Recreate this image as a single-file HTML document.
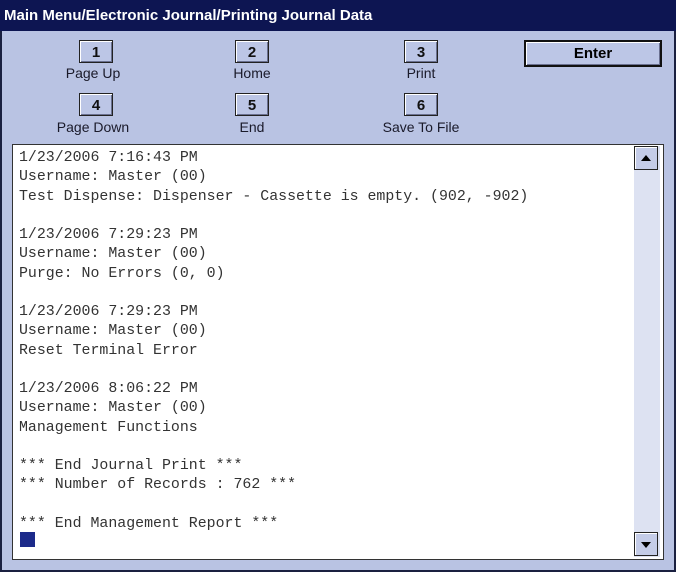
<!DOCTYPE html>
<html><head><style>
body{margin:0;width:676px;height:572px;background:#b9c3e3;position:relative;overflow:hidden;font-family:"Liberation Sans",sans-serif}
.title{position:absolute;left:0;top:0;width:676px;height:31px;background:#0d1552;color:#fff;font-weight:bold;font-size:15px;line-height:31px;padding-left:4px;box-sizing:border-box}
.frame{position:absolute;left:0;top:31px;width:676px;height:541px;border:2px solid #1a2040;border-top:none;box-sizing:border-box}
.btn{position:absolute;width:34px;height:23px;background:#bcc6e6;border:1px solid #222;box-shadow:inset 1px 1px 0 #fff,inset -1px -1px 0 #6a7090;text-align:center;font-weight:bold;font-size:15px;line-height:23px;color:#111;box-sizing:border-box}
.lbl{position:absolute;font-size:14px;color:#1a1a2a;text-align:center;width:140px}
.enter{position:absolute;left:524px;top:40px;width:138px;height:27px;border:2px solid #111;background:#bcc6e6;box-shadow:inset 1px 1px 0 #fff,inset -1px -1px 0 #6a7090;text-align:center;font-weight:bold;font-size:15px;line-height:23px;box-sizing:border-box}
.txt{position:absolute;left:12px;top:144px;width:652px;height:416px;background:#fff;border:1px solid #333;box-sizing:border-box}
pre{margin:0;position:absolute;left:6px;top:4px;font-family:"Liberation Mono",monospace;font-size:14.9px;line-height:19.25px;color:#333}
.sb{position:absolute;left:621px;top:1px;width:26px;height:411px;background:#dde2f2}
.ar{position:absolute;left:0;width:24px;height:24px;background:#c4cce8;border:1px solid #222;box-shadow:inset 1px 1px 0 #fff;box-sizing:border-box}
.cur{position:absolute;left:7px;top:387px;width:15px;height:15px;background:#1c2a8a}
</style></head><body>
<div class="title">Main Menu/Electronic Journal/Printing Journal Data</div>
<div class="frame"></div>
<div class="btn" style="left:79px;top:40px">1</div>
<div class="lbl" style="left:23px;top:65px">Page Up</div>
<div class="btn" style="left:235px;top:40px">2</div>
<div class="lbl" style="left:182px;top:65px">Home</div>
<div class="btn" style="left:404px;top:40px">3</div>
<div class="lbl" style="left:351px;top:65px">Print</div>
<div class="enter">Enter</div>
<div class="btn" style="left:79px;top:93px">4</div>
<div class="lbl" style="left:23px;top:119px">Page Down</div>
<div class="btn" style="left:235px;top:93px">5</div>
<div class="lbl" style="left:182px;top:119px">End</div>
<div class="btn" style="left:404px;top:93px">6</div>
<div class="lbl" style="left:351px;top:119px">Save To File</div>
<div class="txt">
<pre>1/23/2006 7:16:43 PM
Username: Master (00)
Test Dispense: Dispenser - Cassette is empty. (902, -902)

1/23/2006 7:29:23 PM
Username: Master (00)
Purge: No Errors (0, 0)

1/23/2006 7:29:23 PM
Username: Master (00)
Reset Terminal Error

1/23/2006 8:06:22 PM
Username: Master (00)
Management Functions

*** End Journal Print ***
*** Number of Records : 762 ***

*** End Management Report ***</pre>
<div class="cur"></div>
<div class="sb">
<div class="ar" style="top:0"><svg width="22" height="22"><path d="M6 14 L16 14 L11 8 Z" fill="#000"/></svg></div>
<div class="ar" style="top:386px"><svg width="22" height="22"><path d="M6 9 L16 9 L11 15 Z" fill="#000"/></svg></div>
</div>
</div>
</body></html>
